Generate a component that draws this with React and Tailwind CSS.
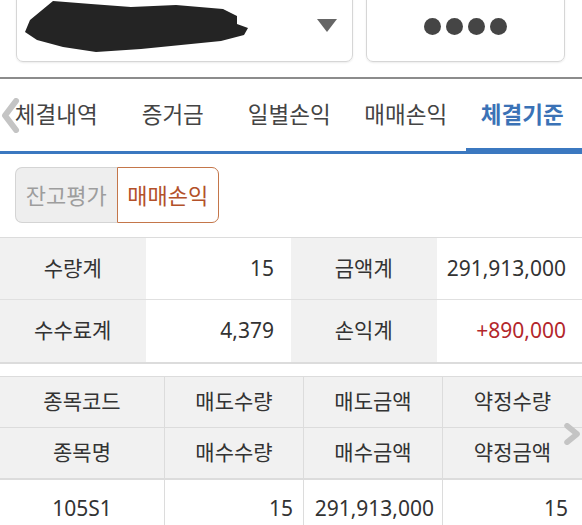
import React from 'react';

const font = { fontFamily: '"Noto Sans", "Noto Sans CJK KR", sans-serif' };

const tabs = ['체결내역', '증거금', '일별손익', '매매손익', '체결기준'];

const summary = [
    ['수량계', '15', '금액계', '291,913,000'],
    ['수수료계', '4,379', '손익계', '+890,000'],
];

function Chevron({ dir = 'left', className }) {
    const d = dir === 'left' ? 'M16 3 L5 17.5 L16 32' : 'M4 3 L15 12 L4 21';
    return (
        <svg className={className} viewBox={dir === 'left' ? '0 0 20 35' : '0 0 20 24'} fill="none">
            <path d={d} stroke="#c4c4c4" strokeWidth="6" strokeLinecap="round" strokeLinejoin="round" />
        </svg>
    );
}

export default function App() {
    return (
        <div className="relative w-[582px] h-[525px] overflow-hidden bg-white text-[#333]" style={font}>
            {/* account selector */}
            <div className="flex h-[79px] border-b-[2px] border-[#8c8c8c] pl-[16px] gap-[13px]">
                <div className="relative -mt-[10px] h-[72px] w-[337px] rounded-[7px] border border-[#d6d6d6] shadow-[0_1px_2px_rgba(0,0,0,0.08)] flex items-center">
                    <svg className="absolute left-[8px] top-[9px]" width="230" height="54" viewBox="24 2 230 54">
                        <path
                            d="M52 3 L90 6 L130 9 L175 7 L222 11 L236 18 L236 26 L247 30 L243 37 L220 43 L170 48 L140 51 L95 54 L62 49 L36 42 L24 34 L29 22 Z"
                            fill="#242424"
                        />
                    </svg>
                    <div className="absolute left-[300px] top-[28px] w-0 h-0 border-l-[10px] border-r-[10px] border-t-[13px] border-l-transparent border-r-transparent border-t-[#666]" />
                </div>
                <div className="-mt-[10px] h-[72px] w-[199px] rounded-[7px] border border-[#d6d6d6] shadow-[0_1px_2px_rgba(0,0,0,0.08)] flex items-center justify-center gap-[5px] pt-[1px]">
                    {[0, 1, 2, 3].map((i) => (
                        <span key={i} className="w-[17px] h-[17px] rounded-full bg-[#454545]" />
                    ))}
                </div>
            </div>

            {/* tabs */}
            <div className="relative h-[75px] border-b-[3px] border-[#3b78c0]">
                <div className="flex h-full -ml-[2px]">
                    {tabs.map((t, i) => {
                        const active = i === tabs.length - 1;
                        return (
                            <div
                                key={t}
                                className={`relative w-[116.5px] shrink-0 flex items-center justify-center text-[22.5px] ${
                                    active ? 'font-bold text-[#3a72b6]' : 'text-[#444]'
                                }`}
                            >
                                {t}
                                {active && (
                                    <span className="absolute left-[2px] -right-[4px] -bottom-[3px] h-[6px] bg-[#3b78c0]" />
                                )}
                            </div>
                        );
                    })}
                </div>
                <Chevron dir="left" className="absolute left-0 top-[19px] w-[20px] h-[35px]" />
            </div>

            {/* segmented */}
            <div className="ml-[15px] mt-[13px] flex h-[56px] w-[204px] text-[22px]">
                <div className="flex-1 flex items-center justify-center rounded-l-[7px] border border-r-0 border-[#d4d4d4] bg-[#eeeeee] text-[#9d9d9d]">
                    잔고평가
                </div>
                <div className="flex-1 flex items-center justify-center rounded-r-[7px] border border-[#c4764a] bg-white text-[#b3512a]">
                    매매손익
                </div>
            </div>

            {/* summary */}
            <div className="mt-[14px] border-t border-b-[2px] border-[#dcdcdc] text-[21px]">
                {summary.map((row, r) => (
                    <div
                        key={r}
                        className={`grid grid-cols-4 h-[62px] ${r === 0 ? 'border-b border-[#e0e0e0]' : ''}`}
                    >
                        <div className="bg-[#f1f1f1] flex items-center justify-center">{row[0]}</div>
                        <div className="flex items-center justify-end pr-[17px]">{row[1]}</div>
                        <div className="bg-[#f1f1f1] flex items-center justify-center">{row[2]}</div>
                        <div
                            className={`flex items-center justify-end pr-[16px] ${
                                row[3].startsWith('+') ? 'text-[#b3272b]' : ''
                            }`}
                        >
                            {row[3]}
                        </div>
                    </div>
                ))}
            </div>

            {/* detail table */}
            <div className="relative mt-[12px] border-t border-[#dcdcdc] text-[21px]">
                <div className="grid grid-cols-[164px_139px_139px_1fr] bg-[#f1f1f1] h-[51px] border-b border-[#dcdcdc]">
                    {['종목코드', '매도수량', '매도금액', '약정수량'].map((h, i) => (
                        <div key={h} className={`flex items-center justify-center ${i > 0 ? 'border-l border-[#dcdcdc]' : ''}`}>
                            {h}
                        </div>
                    ))}
                </div>
                <div className="grid grid-cols-[164px_139px_139px_1fr] bg-[#f1f1f1] h-[52px] border-b-[2px] border-[#dcdcdc]">
                    {['종목명', '매수수량', '매수금액', '약정금액'].map((h, i) => (
                        <div key={h} className={`flex items-center justify-center ${i > 0 ? 'border-l border-[#dcdcdc]' : ''}`}>
                            {h}
                        </div>
                    ))}
                </div>
                <div className="grid grid-cols-[164px_139px_139px_1fr] h-[58px]">
                    <div className="flex items-center justify-center">105S1</div>
                    <div className="flex items-center justify-end pr-[10px] border-l border-[#dcdcdc]">15</div>
                    <div className="flex items-center justify-end pr-[8px] border-l border-[#dcdcdc]">291,913,000</div>
                    <div className="flex items-center justify-end pr-[14px] border-l border-[#dcdcdc]">15</div>
                </div>
                <Chevron dir="right" className="absolute right-0 top-[46px] w-[19px] h-[22px]" />
            </div>
        </div>
    );
}
